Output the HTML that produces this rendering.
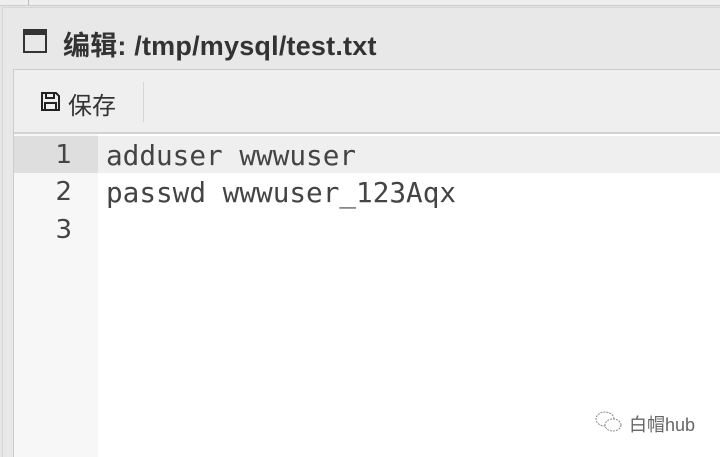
<!DOCTYPE html>
<html><head><meta charset="utf-8"><style>
body{margin:0;width:720px;height:456px;overflow:hidden;background:#e6e6e6;font-family:"Liberation Sans","Noto Sans CJK SC",sans-serif;position:relative}
.top{position:absolute;left:0;top:0;width:720px;height:5px;background:#eee;border-bottom:1px solid #ccc}
.top i{position:absolute;left:28px;top:0;width:1px;height:5px;background:#bbb}
.win{position:absolute;left:2px;top:7px;width:718px;height:449px;background:#e8e8e8;border-left:1px solid #d6d6d6;border-top:1px solid #d6d6d6}
.title{position:absolute;left:60px;top:16px;font-size:27px;font-weight:bold;color:#333;letter-spacing:0.2px}
.icon{position:absolute;left:20px;top:21px;width:24px;height:24px;border:2px solid #333;border-top-width:6px;box-sizing:border-box}
.panel{position:absolute;left:13px;top:69px;width:707px;height:387px;background:#fff;border-left:1px solid #ccc;border-top:1px solid #ccc}
.tb{position:absolute;left:0;top:0;width:707px;height:62px;background:#efefef;border-bottom:2px solid #d3d3d3}
.save{position:absolute;left:54px;top:16px;font-size:24px;color:#333}
.sep{position:absolute;left:129px;top:12px;width:1px;height:40px;background:#cfd8dc}
.gut{position:absolute;left:0;top:64px;width:84px;height:323px;background:#f7f7f7}
.act{position:absolute;left:0;top:66px;width:707px;height:37px;background:#efefef}
.actg{position:absolute;left:0;top:66px;width:84px;height:37px;background:#dedede}
.ln{position:absolute;left:0;width:58px;text-align:right;font-family:"DejaVu Sans",sans-serif;font-size:26px;color:#444}
.code{position:absolute;left:92px;font-family:"DejaVu Sans Mono",monospace;font-size:27.7px;color:#444;white-space:pre}
.wm{position:absolute;left:629px;top:411px;font-size:18px;color:#666}
</style></head><body>
<div class="top"><i></i></div>
<div class="win">
<div class="icon"></div>
<div class="title">编辑: /tmp/mysql/test.txt</div>
</div>
<div class="panel">
<div class="tb">
<svg style="position:absolute;left:26px;top:21px" width="21" height="21" viewBox="0 0 21 21"><path d="M2 2H16L19 5V19H2Z" fill="none" stroke="#222" stroke-width="2"/><path d="M6 2V7H14V2M5 19V12H16V19" fill="none" stroke="#222" stroke-width="2"/></svg>
<div class="save">保存</div><div class="sep"></div></div>
<div class="gut"></div>
<div class="act"></div><div class="actg"></div>
<div class="ln" style="top:70px">1</div>
<div class="ln" style="top:107px">2</div>
<div class="ln" style="top:145px">3</div>
<div class="code" style="top:69px">adduser wwwuser</div>
<div class="code" style="top:106px">passwd wwwuser_123Aqx</div>
</div>
<div class="wm">白帽hub</div>
<svg style="position:absolute;left:594px;top:410px" width="30" height="24"><ellipse cx="11" cy="9" rx="9" ry="7" fill="none" stroke="#888" stroke-dasharray="2 1"/><ellipse cx="19" cy="15" rx="8" ry="6" fill="#fff" stroke="#888" stroke-dasharray="2 1"/></svg>
</body></html>
